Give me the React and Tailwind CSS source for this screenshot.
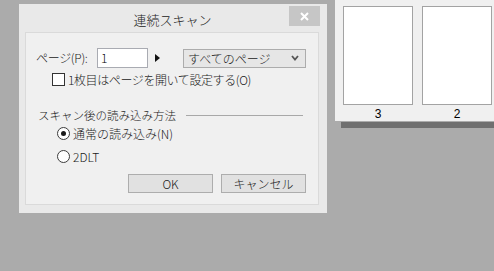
import React from "react";

const jp = { fontFamily: '"Noto Sans CJK JP", "Noto Sans", sans-serif' };

const Radio = ({ checked, label }) => (
  <div className="flex items-center h-[13px] ml-[21px]">
    <span className="w-[13px] h-[13px] rounded-full border border-[#3c3c3c] bg-white flex items-center justify-center">
      {checked && <span className="w-[5px] h-[5px] rounded-full bg-[#1a1a1a]" />}
    </span>
    <span className="ml-[3px] text-[12px] leading-[13px] text-[#1a1a1a]">{label}</span>
  </div>
);

const PageThumb = ({ num }) => (
  <div className="flex flex-col items-center w-[70px]">
    <div className="w-[70px] h-[100px] bg-white border border-[#a3a3a3]" />
    <span
      className="mt-[2px] text-[12px] leading-[14px] text-black"
      style={{ fontFamily: '"Liberation Sans", sans-serif' }}
    >
      {num}
    </span>
  </div>
);

export default function App() {
  return (
    <div className="w-[494px] h-[271px] bg-[#ababab] flex items-start overflow-hidden font-light" style={jp}>
      {/* dialog */}
      <div className="ml-[19px] mt-[4px] w-[308px] h-[209px] bg-[#e9e9e9] flex flex-col pl-[6px] pr-[8px] pb-[8px]">
        <div className="h-[28px] flex items-start">
          <div className="flex-1" />
          <div className="text-[13px] leading-[31px] text-[#222]">連続スキャン</div>
          <div className="flex-1 flex justify-end mr-[-1px]">
            <div className="mt-[2px] w-[31px] h-[20px] bg-[#c6c6c6] flex items-center justify-center">
              <svg width="9" height="9" viewBox="0 0 9 9">
                <path d="M1 1 L8 8 M8 1 L1 8" stroke="#fff" strokeWidth="2" />
              </svg>
            </div>
          </div>
        </div>

        <div className="flex-1 bg-[#f0f0f0] border border-[#dadada] flex flex-col pt-[15px] pl-[10px] pr-[12px]">
          {/* page row */}
          <div className="flex items-center h-[20px]">
            <span className="w-[61px] text-[12px] leading-[20px] text-[#1a1a1a] tracking-[-0.3px]">ページ(P):</span>
            <div className="w-[51px] h-[20px] bg-white border border-[#a9abb2] pl-[3px] text-[12px] leading-[18px] text-black">
              1
            </div>
            <div className="w-[35px] flex items-center">
              <svg className="ml-[7px]" width="5" height="8" viewBox="0 0 5 8">
                <path d="M0 0 L5 4 L0 8 Z" fill="#111" />
              </svg>
            </div>
            <div className="w-[123px] h-[19px] bg-[#e6e6e6] border border-[#acacac] flex items-center pl-[4px] pr-[6px]">
              <span className="flex-1 text-[12px] leading-[17px] text-[#1a1a1a]">すべてのページ</span>
              <svg width="8" height="6" viewBox="0 0 8 6">
                <path d="M1 1 L4 4.5 L7 1" stroke="#555" strokeWidth="1.8" fill="none" />
              </svg>
            </div>
          </div>

          {/* checkbox */}
          <div className="flex items-center h-[13px] mt-[5px] ml-[16px]">
            <span className="w-[13px] h-[13px] border border-[#333] bg-white" />
            <span className="ml-[3px] text-[12px] leading-[13px] text-[#1a1a1a] tracking-[-0.4px]">
              1枚目はページを開いて設定する(O)
            </span>
          </div>

          {/* group */}
          <div className="flex items-center h-[16px] mt-[21px] ml-[2px] pr-[3px]">
            <span className="text-[11.5px] leading-[16px] text-[#1a1a1a]">スキャン後の読み込み方法</span>
            <div className="flex-1 ml-[10px] h-px bg-[#a8a8a8]" />
          </div>

          <div className="mt-[4px] flex flex-col gap-[10px]">
            <Radio checked label="通常の読み込み(N)" />
            <Radio label="2DLT" />
          </div>

          <div className="flex justify-end gap-[8px] mt-[11px]">
            <div className="w-[85px] h-[19px] bg-[#e1e1e1] border border-[#adadad] flex items-center justify-center text-[12px] text-[#1a1a1a]">
              OK
            </div>
            <div className="w-[85px] h-[19px] bg-[#e1e1e1] border border-[#adadad] flex items-center justify-center text-[12px] text-[#1a1a1a]">
              キャンセル
            </div>
          </div>
        </div>
      </div>

      {/* page list */}
      <div className="ml-[8px] flex flex-col w-[159px]">
        <div className="h-[121px] bg-[#f0f0f0] flex gap-[9px] pl-[8px] pt-[6px]">
          <PageThumb num="3" />
          <PageThumb num="2" />
        </div>
        <div className="mt-[1px] ml-[6px] h-[6px] bg-[#6f6f6f]" />
      </div>
    </div>
  );
}
